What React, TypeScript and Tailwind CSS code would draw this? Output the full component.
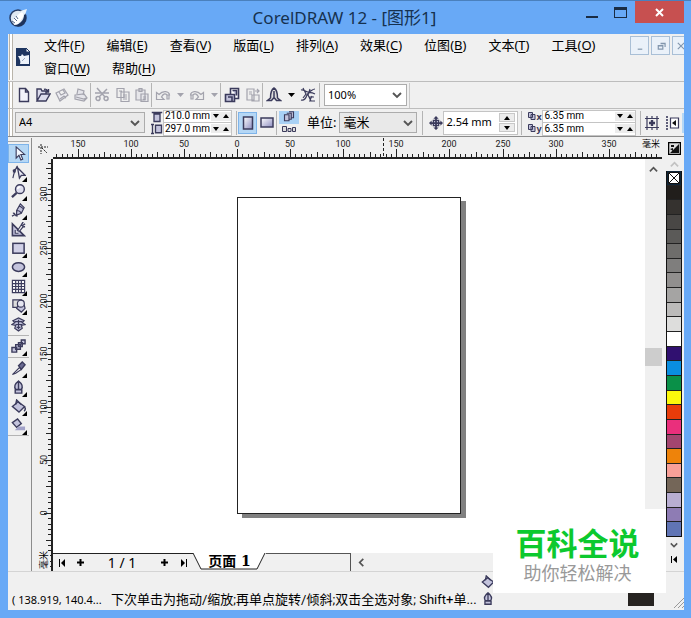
import React from "react";

const INK = "#3b3b5c";
const SOFT = "#c3c3dc";
const DIM = "#a3a3ad";

type Glyph = React.ReactNode;

function Icon({ children, size = 16 }: { children: Glyph; size?: number }) {
  return (
    <svg width={size} height={size} viewBox="0 0 16 16" fill="none" stroke={INK} strokeWidth="1.2" className="shrink-0" aria-hidden="true">
      {children}
    </svg>
  );
}

const tri = (down: boolean) => (
  <svg width="6" height="4" viewBox="0 0 6 4" aria-hidden="true" className="shrink-0">
    <path d={down ? "M0 0h6L3 4z" : "M0 4h6L3 0z"} fill="#000" />
  </svg>
);

function Chevron({ dir, color = "#555", size = 9 }: { dir: "up" | "down" | "left"; color?: string; size?: number }) {
  const d = { up: "M1 7l4-4 4 4", down: "M1 3l4 4 4-4", left: "M7 1L3 5l4 4" }[dir];
  return (
    <svg width={size} height={size} viewBox="0 0 10 10" fill="none" stroke={color} strokeWidth="1.9" aria-hidden="true">
      <path d={d} />
    </svg>
  );
}

function Divider() {
  return <span className="h-6 w-px shrink-0 bg-[#b4b4b4]" />;
}

function Grip() {
  return <span className="mx-px w-1 shrink-0 self-stretch border-x border-[#b9b4aa] bg-white" />;
}

function ToolButton({ label, className = "w-[19px]", children }: { label: string; className?: string; children: Glyph }) {
  return (
    <button type="button" aria-label={label} className={`flex h-[22px] shrink-0 items-center justify-center ${className}`}>
      {children}
    </button>
  );
}

function Dropdown({ label, value, className }: { label: string; value: string; className: string }) {
  return (
    <span className={`relative flex shrink-0 items-center border border-[#acacac] ${className}`}>
      <select aria-label={label} defaultValue={value} className="h-full w-full appearance-none bg-transparent pl-[3px] outline-none">
        <option>{value}</option>
      </select>
      <span className="pointer-events-none absolute right-1">
        <Chevron dir="down" size={10} />
      </span>
    </span>
  );
}

function SpinRow({ label, value }: { label: string; value: string }) {
  return (
    <span className="flex h-3 items-center">
      <input aria-label={label} defaultValue={value} className="h-3 w-0 min-w-0 flex-1 bg-transparent pl-px font-['Roboto',sans-serif] text-[10px] leading-3 outline-none" />
      <button type="button" aria-label={label + " -"} className="flex h-[9px] w-2.5 items-center justify-center bg-[#ececec]">{tri(true)}</button>
      <button type="button" aria-label={label + " +"} className="flex h-[9px] w-2.5 items-center justify-center bg-[#ececec]">{tri(false)}</button>
    </span>
  );
}

/* ---------- title and menus ---------- */

function TitleBar() {
  return (
    <header className="flex h-[33px] shrink-0 items-center">
      <svg width="20" height="20" viewBox="0 0 20 20" className="shrink-0" aria-hidden="true">
        <circle cx="10" cy="10" r="8" fill="#dfe8f2" stroke="#263c66" strokeWidth="1.5" />
        <path d="M7 17c6-1 10-6 9-13 4 5 2 12-3 14-3 1-5 0-6-1z" fill="#1d335c" />
        <path d="M5 12l7-7 4-2-1 6-5 7-4 1z" fill="#fff" />
        <path d="M6 10l3 3M8 8l2 3M4 13l3 2" stroke="#54688b" />
        <path d="M12 3l7-2-2 6z" fill="#eaf3fb" />
      </svg>
      <h1 className="flex-1 pl-[84px] text-center text-[17px] leading-6 text-[#16314f]">CorelDRAW 12 - [图形1]</h1>
      <div className="flex self-start">
        <button type="button" aria-label="最小化" className="flex h-[23px] w-[29px] items-end justify-center pb-1.5">
          <span className="h-0.5 w-3 bg-[#1a2c44]" />
        </button>
        <button type="button" aria-label="最大化" className="flex h-[23px] w-[29px] items-center justify-center">
          <span className="h-[11px] w-[13px] border border-t-[3px] border-[#1a2c44]" />
        </button>
        <button type="button" aria-label="关闭" className="flex h-[22px] w-[49px] items-center justify-center bg-[#c75050]">
          <svg width="9" height="9" viewBox="0 0 9 9" stroke="#fff" strokeWidth="2" aria-hidden="true">
            <path d="M1 1l7 7M8 1L1 8" />
          </svg>
        </button>
      </div>
    </header>
  );
}

const MENUS: [string, string][] = [
  ["文件", "F"], ["编辑", "E"], ["查看", "V"], ["版面", "L"], ["排列", "A"], ["效果", "C"],
  ["位图", "B"], ["文本", "T"], ["工具", "O"], ["窗口", "W"], ["帮助", "H"],
];

function MenuBar() {
  return (
    <div className="flex shrink-0 border-b border-[#bdbdbd] pb-px">
      <Grip />
      <svg width="14" height="18" viewBox="0 0 14 18" className="ml-0.5 shrink-0 self-center" aria-hidden="true">
        <path d="M0 0h10l4 4v14H0z" fill="#1e3560" />
        <path d="M2 8h3l1-2 2 2 5-1v9H4c1-2 0-5-2-8z" fill="#eef3fa" />
        <path d="M10 0v4h4z" fill="#fff" stroke="#1e3560" />
        <path d="M6 13l3-3" stroke="#9aa8c0" fill="none" />
      </svg>
      <nav className="ml-3.5 flex flex-1 flex-wrap gap-x-[22px] text-[13px] leading-[23px]">
        {MENUS.map(([name, key]) => (
          <button key={key} type="button" className="h-[23px]">
            {name}(<u className="underline-offset-2">{key}</u>)
          </button>
        ))}
      </nav>
      <div className="flex h-[22px] shrink-0 gap-0.5 overflow-hidden">
        {[
          ["最小化文档", "M3 9h5"],
          ["还原文档", "M5 2.5h5v4M2.5 5h5v4h-5zM2.5 5.500h5M5 3h5"],
          ["关闭文档", "M2 2l7 7M9 2l-7 7"],
        ].map(([label, d], i) => (
          <button key={label} type="button" aria-label={label} className={`mt-0.5 flex h-[19px] items-center justify-center border border-[#a9bfd6] bg-[#eaf1f9] ${i === 2 ? "-mr-1.5 w-[18px]" : "w-[19px]"}`}>
            <svg width="10" height="10" viewBox="0 0 11 11" fill="none" stroke="#8296ad" strokeWidth="1.3" aria-hidden="true">
              <path d={d} />
            </svg>
          </button>
        ))}
      </div>
    </div>
  );
}

/* ---------- standard toolbar ---------- */

const NewDoc = <path d="M3.500 1.500h6L12.500 5v9.500h-9zM9.500 1.500V5h3" fill="#f2f2fa" strokeWidth="1.400" />;
const OpenDoc = <path d="M2 14V2h4l1 2h4v3M2 14l4-7h9l-4 7zM9 2.500c2-1 3 0 4 2M13.500 2v3h-3" fill="#dcdcec" strokeWidth="1.400" />;
const SaveDoc = <path d="M2 6l8-4 4 6-8 6zM5 5l2 3 4-2-2-3M6 12l4-3 2 2" stroke={DIM} fill="#ededf2" />;
const PrintDoc = <path d="M4 7l1-5 6 2-1 4M2 8l9-1 3 4-3 3-9-2zM3 10l8 2 2-1" stroke={DIM} fill="#e4e4ea" />;
const Cut = <path d="M3 1l8 9M13 2L5 10M1 6h14M4 9.500a2 2 0 1 0 .1 4 2 2 0 0 0-.1-4zM12 9.500a2 2 0 1 0 .1 4 2 2 0 0 0-.1-4z" stroke={DIM} strokeWidth="1.500" />;
const Copy = <path d="M2 1.500h7v9H2zM6 5h8v9.500H6zM8 8h4M8 10h4M8 12h4M4 4h3" stroke={DIM} fill="#eee" />;
const Paste = <path d="M2 3h9v10H2zM5 1.500h3v3H5zM7 7h7v7.500H7zM9 10h3M9 12h3" stroke={DIM} fill="#e6e6ea" />;
const Undo = <path d="M1.500 12.500v-7l2.500 2C8 3 14 4 14.500 8H12c-2-2-4-1-5.500 2l2.500 2.500zM12 8v4h2V8" stroke={DIM} fill="#eee" />;
const Redo = <path d="M14.500 12.500v-7l-2.500 2C8 3 2 4 1.500 8H4c2-2 4-1 5.500 2L7 12.500zM4 8v4H2V8" stroke={DIM} fill="#eee" />;
const Import = (
  <>
    <path d="M6.500 1.500h8v10h-8z" fill="#fff" strokeWidth="1.600" />
    <path d="M1.500 7.500h9v7h-9zM4 10h4v4M8.500 3.500h4v5" fill={SOFT} strokeWidth="1.600" />
  </>
);
const Export = <path d="M2 2h7v11H2zM4 5h3M4 7h3M7 8h7v6H7zM10 4h4M12 2l2 2-2 2" stroke={DIM} fill="#eee" />;
const Launcher = <path d="M8 1C4.500 3 4.500 7 4.500 11L1.500 13.500h4l2.500-3 2.500 3h4L11.500 11c0-4 0-8-3.500-10zM8 4v7" fill="#ddd" strokeWidth="1.500" />;
const Web = <path d="M1 3c3-1 4 2 7 2s4-3 7-3M1 13c3 1 5-2 6-5s4-3 8-1M3 1l3 6-3 4M10 2l-2 6 3 6M9 10h5M9 14h6M12 9l-2 4" />;

function MiniDown({ color = "#000" }: { color?: string }) {
  return (
    <svg width="7" height="4" viewBox="0 0 7 4" aria-hidden="true">
      <path d="M0 0h7L3.500 4z" fill={color} />
    </svg>
  );
}

function StandardBar() {
  return (
    <div className="flex h-[27px] shrink-0 items-center border-b border-[#bdbdbd]">
      <Grip />
      <ToolButton label="新建"><Icon>{NewDoc}</Icon></ToolButton>
      <ToolButton label="打开"><Icon>{OpenDoc}</Icon></ToolButton>
      <ToolButton label="保存"><Icon>{SaveDoc}</Icon></ToolButton>
      <ToolButton label="打印"><Icon>{PrintDoc}</Icon></ToolButton>
      <Divider />
      <ToolButton label="剪切" className="w-[22px]"><Icon>{Cut}</Icon></ToolButton>
      <ToolButton label="复制"><Icon>{Copy}</Icon></ToolButton>
      <ToolButton label="粘贴"><Icon>{Paste}</Icon></ToolButton>
      <Divider />
      <ToolButton label="撤销" className="w-[22px]"><Icon>{Undo}</Icon></ToolButton>
      <ToolButton label="撤销列表" className="w-3"><MiniDown color={DIM} /></ToolButton>
      <ToolButton label="重做" className="w-[22px]"><Icon>{Redo}</Icon></ToolButton>
      <ToolButton label="重做列表" className="w-3"><MiniDown color={DIM} /></ToolButton>
      <Divider />
      <ToolButton label="导入" className="w-[22px]"><Icon>{Import}</Icon></ToolButton>
      <ToolButton label="导出"><Icon>{Export}</Icon></ToolButton>
      <Divider />
      <ToolButton label="应用程序启动器" className="w-[22px]"><Icon>{Launcher}</Icon></ToolButton>
      <ToolButton label="启动器列表" className="w-3"><MiniDown /></ToolButton>
      <ToolButton label="网上社区" className="w-[22px]"><Icon>{Web}</Icon></ToolButton>
      <Divider />
      <Dropdown label="缩放级别" value="100%" className="ml-1 h-[22px] w-[83px] bg-white text-[11px]" />
      <span className="ml-0.5 h-[25px] w-px bg-[#c9c9c9]" />
    </div>
  );
}

/* ---------- property bar ---------- */

const Page = (landscape: boolean) => (
  <>
    <defs>
      <linearGradient id={landscape ? "pl" : "pp"} x1="0" y1="0" x2="1" y2="1">
        <stop offset="0" stopColor="#fff" />
        <stop offset="1" stopColor="#8c8cc0" />
      </linearGradient>
    </defs>
    {landscape ? (
      <rect x="2" y="3" width="12" height="9" fill="url(#pl)" strokeWidth="1.500" />
    ) : (
      <rect x="3.500" y="2" width="9" height="12" fill="url(#pp)" strokeWidth="1.500" />
    )}
  </>
);

function PropertyBar() {
  return (
    <div className="flex h-7 shrink-0 items-center overflow-hidden border-b border-[#8c8c8c]">
      <Grip />
      <Dropdown label="纸张类型" value="A4" className="ml-px h-[21px] w-[130px] bg-[#e9e9e9] text-[11px]" />
      <div className="ml-1.5 flex flex-col">
        <Icon size={12}><path d="M1 2h14M4 4h8v10H4z" fill={SOFT} strokeWidth="1.800" /></Icon>
        <Icon size={12}><path d="M2 2v12M0 2h4M0 14h4M6 3h8v10H6z" fill={SOFT} strokeWidth="1.800" /></Icon>
      </div>
      <div className="w-[69px] shrink-0 divide-y divide-[#c4c4c4] border border-[#c4c4c4] bg-white">
        <SpinRow label="纸张宽度" value="210.0 mm" />
        <SpinRow label="纸张高度" value="297.0 mm" />
      </div>
      <span className="w-1 shrink-0" />
      <Divider />
      <span className="w-px shrink-0" />
      <ToolButton label="纵向" className="w-[19px] border border-[#7eb4ea] bg-[#b5d7f5]"><Icon>{Page(false)}</Icon></ToolButton>
      <ToolButton label="横向"><Icon>{Page(true)}</Icon></ToolButton>
      <Divider />
      <div className="mx-0.5 flex w-5 shrink-0 flex-col">
        <button type="button" aria-label="全部页面" className="flex h-[13px] items-center justify-center bg-[#a9d1f5]">
          <Icon size={12}><path d="M2 5h6v8H2zM5 3h6v8H8M8 1h6v8h-3" fill={SOFT} strokeWidth="1.500" /></Icon>
        </button>
        <button type="button" aria-label="当前页面" className="flex h-[11px] items-center justify-center">
          <svg width="14" height="8" viewBox="0 0 14 8" fill="#ddd" stroke={INK} aria-hidden="true"><path d="M.5 1.500h4v5h-4zM6 3.500h3v3H6zM10.500 2.500h3v4h-3z" /></svg>
        </button>
      </div>
      <label htmlFor="units" className="ml-1.5 shrink-0 text-[13px]">单位:</label>
      <span className="relative ml-[3px] flex h-[21px] w-[78px] shrink-0 items-center border border-[#acacac] bg-[#e9e9e9] text-[13px]">
        <select id="units" className="h-full w-full appearance-none bg-transparent pl-[3px] outline-none"><option>毫米</option></select>
        <span className="pointer-events-none absolute right-[3px]"><Chevron dir="down" size={10} /></span>
      </span>
      <span className="w-[5px] shrink-0" />
      <Divider />
      <span className="w-1.5 shrink-0" />
      <Icon size={14}><path d="M5 5h6v6H5z" fill={SOFT} strokeWidth="1.500" /><path d="M8 0l3 3H5zM8 16l3-3H5zM0 8l3-3v6zM16 8l-3-3v6zM7 3h2v10H7zM3 7h10v2H3z" fill={INK} stroke="none" /></Icon>
      <div className="flex h-6 w-[75px] shrink-0 items-center border border-[#c4c4c4] bg-white">
        <input aria-label="微调偏移" defaultValue="2.54 mm" className="w-0 min-w-0 flex-1 bg-transparent pl-0.5 text-[11px] outline-none" />
        <span className="mr-0.5 flex w-4 flex-col gap-px">
          <button type="button" aria-label="增加" className="flex h-[9px] items-center justify-center border border-[#c8c8c8] bg-[#ececec]">{tri(false)}</button>
          <button type="button" aria-label="减少" className="flex h-[9px] items-center justify-center border border-[#c8c8c8] bg-[#ececec]">{tri(true)}</button>
        </span>
      </div>
      <span className="w-[3px] shrink-0" />
      <Divider />
      <div className="ml-1.5 flex w-3.5 shrink-0 flex-col text-[9px] font-bold leading-3 text-[#3b3b5c]">
        {["x", "y"].map((axis) => (
          <span key={axis} className="flex h-3 items-center">
            <svg width="8" height="9" viewBox="0 0 8 9" fill={SOFT} stroke={INK} aria-hidden="true"><path d="M.5.5h4v5h-4zM3 2.500h4v5H3z" /></svg>
            {axis}
          </span>
        ))}
      </div>
      <div className="w-[94px] shrink-0 divide-y divide-[#c4c4c4] border border-[#c4c4c4] bg-white">
        <SpinRow label="再制距离 X" value="6.35 mm" />
        <SpinRow label="再制距离 Y" value="6.35 mm" />
      </div>
      <span className="w-1 shrink-0" />
      <Divider />
      <ToolButton label="贴齐网格" className="w-[22px]">
        <Icon><path d="M3 1v14M13 1v14M8 1v3M8 12v3M1 3.500h14M1 12.500h14" /><path d="M8 5v6M5 8h6" strokeWidth="2.400" /></Icon>
      </ToolButton>
      <ToolButton label="贴齐导线" className="w-[19px]">
        <Icon><path d="M2 1v14" strokeDasharray="2 1" strokeWidth="1.600" /><path d="M5.500 3h8v10h-8z" fill="#fff" /><path d="M11 5v6L7 8z" fill="#111" stroke="none" /></Icon>
      </ToolButton>
      <span className="ml-auto h-5 w-0.5 shrink-0 bg-[#b5d7f5]" />
    </div>
  );
}

/* ---------- toolbox ---------- */

const TOOLS: { name: string; flyout?: boolean; split?: boolean; art: Glyph }[] = [
  { name: "挑选工具", art: <path d="M5.500 1v12l3-3 2 5 2-1-2-5h4z" fill="#f4f8ff" /> },
  { name: "形状工具", flyout: true, art: <><path d="M2 14C3 9 4 5 7 1M2 6l5-3" /><path d="M7 3l8 8h-4l-2 3z" fill="#e9e9f4" strokeWidth="1.400" /><path d="M2 5h3v3H2z" fill={INK} stroke="none" /></> },
  { name: "缩放工具", flyout: true, art: <><circle cx="9.500" cy="5.500" r="4.700" fill="#dedeee" strokeWidth="1.500" /><path d="M6 9.500l-5 4.500" strokeWidth="2.400" /><path d="M7 5.500a3 3 0 0 1 3-2.500" stroke="#fff" strokeWidth="1.500" /></> },
  { name: "手绘工具", flyout: true, art: <path d="M6 8l4-7 4 4-3 6-5 2zM6 8c2 0 4 1 5 3M9 3l4 3M2 11c3-1 1 3 5 3M1 14l4-2" fill={SOFT} strokeWidth="1.300" /> },
  { name: "智能绘图", art: <><path d="M1.500 2v12.500H14z" fill={SOFT} strokeWidth="1.700" /><path d="M4.500 8.500v3.500H8M7 9l4-6 2 2-4 5z" fill="#eee" /><path d="M11 3l2-3M12 4l3-2M13 5l2 0" strokeWidth="1.500" /></> },
  { name: "矩形工具", flyout: true, art: <rect x="2" y="2.500" width="12" height="10.500" fill="#d0d0e6" strokeWidth="1.600" /> },
  { name: "椭圆工具", flyout: true, art: <ellipse cx="8" cy="7.500" rx="6.500" ry="4.700" fill={SOFT} strokeWidth="1.600" /> },
  { name: "图纸工具", flyout: true, art: <path d="M1.500 1.500h13v13h-13zM5 1.500v13M8 1.500v13M11 1.500v13M1.500 5h13M1.500 8h13M1.500 11h13" fill="#fff" strokeWidth="1.300" /> },
  { name: "基本形状", flyout: true, art: <><path d="M2 2h9v8H2z" fill="#ddd" strokeWidth="1.300" /><path d="M8 7h6l1 4-4 4-5-4z" fill={SOFT} strokeWidth="1.300" /><circle cx="10.500" cy="6" r="3.700" fill="#e5e5f0" strokeWidth="1.300" /></> },
  { name: "文本工具", art: <path d="M2 4l6-3 6 3-2 2 3 2-4 1 1 3-4 3-4-3 1-3-4-1 3-2zM4 5h8M8 3v10M5 8h7M6 11h4" fill={SOFT} strokeWidth="1.300" /> },
  { name: "交互式调和", flyout: true, split: true, art: <path d="M11 1h4v4h-4zM8 4h4v4H8zM5 6h5v5H5zM1 9h5v5H1z" fill={SOFT} strokeWidth="1.500" /> },
  { name: "滴管工具", flyout: true, split: true, art: <><path d="M1.500 14.500L9 7l2 2-6 4z" fill="#fff" /><path d="M8 5l4-4 3 3-4 5z" fill="#6b6b92" strokeWidth="1.500" /></> },
  { name: "轮廓工具", flyout: true, art: <path d="M8 1c-4 3-5 6-3 9h6c2-3 1-6-3-9zM8 2v8M4.500 10.500h7V14h-7z" fill={SOFT} strokeWidth="1.500" /> },
  { name: "填充工具", flyout: true, art: <><path d="M1.500 8l6-5 7 5-6 6z" fill={SOFT} strokeWidth="1.500" /><path d="M5 6l1-5 5 5M14 8c2 2 1 4 0 5" strokeWidth="1.500" /></> },
  { name: "交互式填充", flyout: true, art: <><path d="M1.500 5L7 1l4 5-5 4z" fill={SOFT} strokeWidth="1.500" /><path d="M8 9h7v4H4z" fill="#a2a2c8" stroke="none" /></> },
];

function Toolbox() {
  return (
    <aside aria-label="工具箱" className="flex w-6 shrink-0 flex-col border-r border-[#8c8c8c]">
      <div className="mr-0.5 mb-0.5 h-1 border-b border-[#a8a8a8]" />
      {TOOLS.map((tool, i) => (
        <React.Fragment key={tool.name}>
          {tool.split && <span className="my-px mr-0.5 h-px bg-[#b4b4b4]" />}
          <button
            type="button"
            aria-label={tool.name}
            className={`relative mr-0.5 flex h-[19px] shrink-0 items-center justify-center ${i === 0 ? "border border-[#7eb4ea] bg-[#b5d7f5]" : ""}`}
          >
            <Icon size={15}>{tool.art}</Icon>
            {tool.flyout && (
              <svg width="5" height="5" viewBox="0 0 5 5" className="absolute right-0.5 bottom-0" aria-hidden="true"><path d="M5 0v5H0z" fill="#000" /></svg>
            )}
          </button>
        </React.Fragment>
      ))}
      <span className="mr-0.5 h-px bg-[#b4b4b4]" />
    </aside>
  );
}

/* ---------- rulers ---------- */

// Fifty millimetres take 53.1 px at this zoom level.
const MM = 1.062;

function HorizontalRuler() {
  const origin = 184;
  const ticks = Array.from({ length: 400 }, (_, i) => i - 34);
  return (
    <div className="relative h-[21px] flex-1 overflow-hidden border-b-2 border-[#222]">
      <svg width="100%" height="19" className="block font-['Roboto',sans-serif]" fontSize="9" textAnchor="middle">
        {ticks.map((n) => {
          const x = Math.round(origin + n * 5 * MM);
          const h = n % 10 === 0 ? 8 : n % 5 === 0 ? 5 : 3;
          return <rect key={n} x={x} y={19 - h} width="1" height={h} fill="#222" />;
        })}
        {Array.from({ length: 11 }, (_, i) => i - 3).map((n) => (
          <text key={n} x={Math.round(origin + n * 50 * MM)} y="9" fill="#222">{Math.abs(n * 50)}</text>
        ))}
        <path d="M330.500 0v19" stroke="#222" strokeDasharray="3 2" />
      </svg>
      <span className="absolute top-0 right-0.5 bg-[#f0f0f0] text-[9px] leading-[12px]">毫米</span>
    </div>
  );
}

function VerticalRuler() {
  const origin = 354;
  const ticks = Array.from({ length: 180 }, (_, i) => 68 - i);
  return (
    <div className="relative w-[21px] shrink-0 overflow-hidden border-r-2 border-[#222]">
      <svg width="19" height="100%" className="absolute inset-0 font-['Roboto',sans-serif]" fontSize="9" textAnchor="middle">
        {ticks.map((n) => {
          const w = n % 10 === 0 ? 7 : n % 5 === 0 ? 5 : 3;
          return <rect key={n} x={19 - w} y={Math.round(origin - n * 5 * MM)} width={w} height="1" fill="#222" />;
        })}
        {Array.from({ length: 7 }, (_, n) => {
          const y = Math.round(origin - n * 50 * MM);
          return <text key={n} x="15" y={y} transform={`rotate(-90 15 ${y})`} fill="#222">{n * 50}</text>;
        })}
      </svg>
      <span className="absolute bottom-0.5 left-1.5 bg-[#f0f0f0] text-[9px] leading-[12px] [writing-mode:sideways-lr]">毫米</span>
    </div>
  );
}

/* ---------- drawing area ---------- */

function PageNav() {
  const step = "flex h-full items-center justify-center";
  const plus = <svg width="7" height="7" viewBox="0 0 7 7" aria-hidden="true"><path d="M3.500 0v7M0 3.500h7" stroke="#000" strokeWidth="2" /></svg>;
  return (
    <div className="flex h-[18px] shrink-0">
      <div className="flex w-[140px] shrink-0 items-center border-t border-[#222]">
        <button type="button" aria-label="第一页" className={`${step} w-[18px]`}>
          <svg width="7" height="8" viewBox="0 0 7 8" aria-hidden="true"><path d="M0 0h1v8H0zM6 0v8L2 4z" /></svg>
        </button>
        <button type="button" aria-label="前面添加页" className={`${step} w-[18px]`}>{plus}</button>
        <span className="flex-1 text-center text-[14px] leading-4">1 / 1</span>
        <button type="button" aria-label="后面添加页" className={`${step} w-[18px]`}>{plus}</button>
        <button type="button" aria-label="最后一页" className={`${step} w-5`}>
          <svg width="7" height="8" viewBox="0 0 7 8" aria-hidden="true"><path d="M6 0h1v8H6zM1 0v8l4-4z" /></svg>
        </button>
      </div>
      <button type="button" className="relative h-[17px] w-[73px] shrink-0 font-['DejaVu_Serif','Noto_Sans_CJK_SC',serif] text-[14px] leading-[17px] font-bold">
        <svg width="73" height="17" viewBox="0 0 73 17" className="absolute inset-0" aria-hidden="true">
          <path d="M0 0l8 16h56L72 0" fill="#fff" stroke="#222" />
        </svg>
        <span className="relative">页面 1</span>
      </button>
      <span className="w-[85px] shrink-0 border-t border-r border-[#555]" />
      <button type="button" aria-label="向左滚动" className="flex w-5 items-center justify-center"><Chevron dir="left" /></button>
      <span className="flex-1" />
    </div>
  );
}

function Workspace() {
  return (
    <main className="flex min-w-0 flex-1 flex-col">
      <div className="flex shrink-0">
        <span className="flex w-[21px] shrink-0 items-center justify-center">
          <svg width="10" height="10" viewBox="0 0 10 10" stroke="#222" strokeDasharray="2 1" aria-hidden="true"><path d="M3 0v10M0 3h10M4 4l5 5" /></svg>
        </span>
        <HorizontalRuler />
      </div>
      <div className="flex min-h-0 flex-1">
        <VerticalRuler />
        <div className="flex min-w-0 flex-1 flex-col">
          <div className="flex min-h-0 flex-1">
            <div className="relative min-w-0 flex-1 overflow-hidden bg-white">
              <div className="absolute top-[38px] left-[184px] h-[317px] w-[224px] border border-[#222] bg-white shadow-[5px_4px_0_#808080]" />
            </div>
            <div className="flex w-[17px] shrink-0 flex-col items-center pt-1">
              <button type="button" aria-label="向上滚动" className="flex h-3 w-full items-center justify-center"><Chevron dir="up" /></button>
              <span className="mt-[173px] h-[18px] w-full bg-[#cdcdcd]" />
            </div>
          </div>
          <PageNav />
        </div>
      </div>
    </main>
  );
}

const SWATCHES = [
  "bg-[#211e1b]", "bg-[#35322f]", "bg-[#494745]", "bg-[#5b5a58]", "bg-[#6e6d6b]", "bg-[#7f7e7d]", "bg-[#918f8e]",
  "bg-[#a5a4a3]", "bg-[#bcbbba]", "bg-[#dddddc]", "bg-white", "bg-[#301070]", "bg-[#0a8ee0]", "bg-[#0a9048]",
  "bg-[#fcf80c]", "bg-[#e83c0a]", "bg-[#ea2f7c]", "bg-[#a3456f]", "bg-[#ee830a]", "bg-[#f8a098]", "bg-[#746658]",
  "bg-[#b8aed2]", "bg-[#8e7cb4]", "bg-[#6074b4]",
];

function Palette() {
  return (
    <aside aria-label="调色板" className="flex w-[22px] shrink-0 flex-col items-center pl-0.5">
      <button type="button" aria-label="调色板菜单" className="mt-1 flex h-[15px] w-[13px] shrink-0">
        <svg width="13" height="13" viewBox="0 0 13 13" aria-hidden="true">
          <path d="M.5.5h12v12H.5z" fill="#ddd" stroke="#000" strokeWidth="1.500" /><path d="M11 2v9H2zM3 3h3v2H3zM2 7l3-1v3z" fill="#111" />
        </svg>
      </button>
      <span className="flex h-3.5 shrink-0 items-center"><Chevron dir="up" color="#c2c2c2" /></span>
      <div className="flex h-[366px] w-4 shrink-0 flex-col divide-y divide-[#222] border-x border-b border-[#111]">
        <button type="button" aria-label="无填充" className="flex flex-1 items-center justify-center bg-[#0d2438]">
          <svg width="12" height="12" viewBox="0 0 12 12" fill="#fff" stroke="#111" aria-hidden="true"><path d="M.5.5h11v11H.5zM1 1l10 10M11 1L1 11" /></svg>
        </button>
        {SWATCHES.map((color, i) => (
          <button key={color} type="button" aria-label={`颜色 ${i + 1}`} className={`flex-1 ${color}`} />
        ))}
      </div>
      <button type="button" aria-label="下一组颜色" className="flex h-[15px] shrink-0 items-center"><Chevron dir="down" size={8} /></button>
      <button type="button" aria-label="展开调色板" className="flex h-3.5 shrink-0 items-center">
        <svg width="6" height="7" viewBox="0 0 6 7" aria-hidden="true"><path d="M0 0h1v7H0zM6 0v7L2 3.500z" /></svg>
      </button>
    </aside>
  );
}

function StatusBar() {
  return (
    <footer className="relative flex h-[39px] shrink-0 items-end border-t border-[#d4d4d4]">
      <span className="w-[103px] shrink-0 pb-0.5 pl-1 text-[11px] leading-4">( 138.919, 140.4...</span>
      <span className="w-[370px] shrink-0 pb-0.5 font-['Roboto','Noto_Sans_CJK_SC',sans-serif] text-[13px] leading-4 whitespace-nowrap">下次单击为拖动/缩放;再单点旋转/倾斜;双击全选对象; Shift+单...</span>
      <span className="flex flex-col items-center gap-[3px] pb-1">
        <Icon size={14}>{TOOLS[13].art}</Icon>
        <Icon size={14}>{TOOLS[12].art}</Icon>
      </span>
      <span className="mr-[30px] mb-1 ml-auto h-4 w-[26px] bg-[#262321]" />
      <svg width="10" height="10" viewBox="0 0 10 10" stroke="#999" className="absolute right-0 bottom-0.5" aria-hidden="true">
        <path d="M0 10L10 0M4 10l6-6M8 10l2-2" />
      </svg>
    </footer>
  );
}

export default function App() {
  return (
    <div className="relative flex h-screen flex-col overflow-hidden border-t border-[#4a80bd] bg-[#68a9f6] pr-[7px] pb-2 pl-2 font-['Noto_Sans','Noto_Sans_CJK_SC',sans-serif] text-black">
      <TitleBar />
      <div className="flex min-h-0 flex-1 flex-col bg-[#f0f0f0]">
        <MenuBar />
        <StandardBar />
        <PropertyBar />
        <div className="mt-px flex min-h-0 flex-1">
          <Toolbox />
          <Workspace />
          <Palette />
        </div>
        <StatusBar />
      </div>
      <div className="absolute right-[25px] bottom-[25px] flex h-[84px] w-[173px] flex-col items-center bg-white pt-[17px] pr-1">
        <strong className="text-[31px] leading-[34px] font-bold text-[#0cc92e]">百科全说</strong>
        <span className="text-[18px] leading-[26px] text-[#999]">助你轻松解决</span>
      </div>
    </div>
  );
}
